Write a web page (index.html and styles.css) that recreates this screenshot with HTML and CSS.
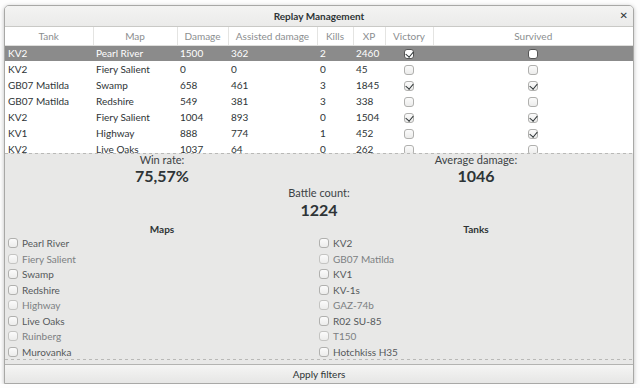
FILE: index.html
```html
<!DOCTYPE html>
<html lang="en">

<head>
    <meta charset="UTF-8">
    <meta name="viewport" content="width=device-width, initial-scale=1.0">
    <title>Replay Management</title>
    <link rel="stylesheet" href="styles.css">
</head>

<body>
    <div class="window">
        <header class="titlebar">
            <span class="title">Replay Management</span>
            <button class="close-button">&#x2715;</button>
        </header>

        <!-- replay list -->
        <div class="replays">
            <table class="replay-table">
                <colgroup>
                    <col style="width: 88px">
                    <col style="width: 84px">
                    <col style="width: 51px">
                    <col style="width: 89px">
                    <col style="width: 36px">
                    <col style="width: 32px">
                    <col style="width: 48px">
                    <col>
                </colgroup>
                <thead>
                    <tr>
                        <th>Tank</th>
                        <th>Map</th>
                        <th>Damage</th>
                        <th>Assisted damage</th>
                        <th>Kills</th>
                        <th>XP</th>
                        <th>Victory</th>
                        <th>Survived</th>
                    </tr>
                </thead>
                <tbody>
                    <tr class="selected">
                        <td>KV2</td><td>Pearl River</td><td>1500</td><td>362</td><td>2</td><td>2460</td>
                        <td class="cell-check"><span class="check checked"></span></td>
                        <td class="cell-check"><span class="check"></span></td>
                    </tr>
                    <tr>
                        <td>KV2</td><td>Fiery Salient</td><td>0</td><td>0</td><td>0</td><td>45</td>
                        <td class="cell-check"><span class="check"></span></td>
                        <td class="cell-check"><span class="check"></span></td>
                    </tr>
                    <tr>
                        <td>GB07 Matilda</td><td>Swamp</td><td>658</td><td>461</td><td>3</td><td>1845</td>
                        <td class="cell-check"><span class="check checked"></span></td>
                        <td class="cell-check"><span class="check checked"></span></td>
                    </tr>
                    <tr>
                        <td>GB07 Matilda</td><td>Redshire</td><td>549</td><td>381</td><td>3</td><td>338</td>
                        <td class="cell-check"><span class="check"></span></td>
                        <td class="cell-check"><span class="check"></span></td>
                    </tr>
                    <tr>
                        <td>KV2</td><td>Fiery Salient</td><td>1004</td><td>893</td><td>0</td><td>1504</td>
                        <td class="cell-check"><span class="check checked"></span></td>
                        <td class="cell-check"><span class="check checked"></span></td>
                    </tr>
                    <tr>
                        <td>KV1</td><td>Highway</td><td>888</td><td>774</td><td>1</td><td>452</td>
                        <td class="cell-check"><span class="check"></span></td>
                        <td class="cell-check"><span class="check checked"></span></td>
                    </tr>
                    <tr>
                        <td>KV2</td><td>Live Oaks</td><td>1037</td><td>64</td><td>0</td><td>262</td>
                        <td class="cell-check"><span class="check"></span></td>
                        <td class="cell-check"><span class="check"></span></td>
                    </tr>
                </tbody>
            </table>
        </div>
        <div class="undershoot"></div>

        <!-- summary -->
        <section class="summary">
            <div class="stat">
                <div class="stat-label">Win rate:</div>
                <div class="stat-value">75,57%</div>
            </div>
            <div class="stat">
                <div class="stat-label">Average damage:</div>
                <div class="stat-value">1046</div>
            </div>
            <div class="stat stat-wide">
                <div class="stat-label">Battle count:</div>
                <div class="stat-value">1224</div>
            </div>
        </section>

        <!-- filters -->
        <section class="filters">
            <div class="filter-group">
                <h2>Maps</h2>
                <label class="option"><span class="check"></span>Pearl River</label>
                <label class="option dim"><span class="check"></span>Fiery Salient</label>
                <label class="option"><span class="check"></span>Swamp</label>
                <label class="option"><span class="check"></span>Redshire</label>
                <label class="option dim"><span class="check"></span>Highway</label>
                <label class="option"><span class="check"></span>Live Oaks</label>
                <label class="option dim"><span class="check"></span>Ruinberg</label>
                <label class="option"><span class="check"></span>Murovanka</label>
            </div>
            <div class="filter-group">
                <h2>Tanks</h2>
                <label class="option"><span class="check"></span>KV2</label>
                <label class="option dim"><span class="check"></span>GB07 Matilda</label>
                <label class="option"><span class="check"></span>KV1</label>
                <label class="option"><span class="check"></span>KV-1s</label>
                <label class="option dim"><span class="check"></span>GAZ-74b</label>
                <label class="option"><span class="check"></span>R02 SU-85</label>
                <label class="option dim"><span class="check"></span>T150</label>
                <label class="option"><span class="check"></span>Hotchkiss H35</label>
            </div>
        </section>
        <div class="undershoot"></div>

        <button class="apply-button">Apply filters</button>
    </div>
</body>

</html>
```

FILE: styles.css
```css
* {
    margin: 0;
    padding: 0;
    box-sizing: border-box;
}

body {
    font-family: Lato, "Noto Sans", sans-serif;
    font-size: 10px;
    background-color: #fdfdfd;
    color: #2e3436;
    padding: 5px 6px 0 4px;
}

.window {
    width: 630px;
    height: 379px;
    background-color: #e8e8e7;
    border: 1px solid #a8a8a6;
    border-radius: 5px 5px 0 0;
    box-shadow: 0 1px 4px rgba(0, 0, 0, 0.25);
    display: flex;
    flex-direction: column;
    overflow: hidden;
}

/* title bar */

.titlebar {
    height: 21px;
    flex-shrink: 0;
    display: flex;
    align-items: center;
    justify-content: center;
    position: relative;
    background: linear-gradient(#f3f3f2, #ebebea);
    border-bottom: 1px solid #c9c9c6;
}

.title {
    font-weight: bold;
    font-size: 10px;
}

.close-button {
    position: absolute;
    right: 5px;
    top: 4px;
    border: none;
    background: none;
    font-family: "DejaVu Sans", sans-serif;
    font-size: 10px;
    font-weight: bold;
    color: #2e3436;
}

/* replay table */

.replays {
    height: 126px;
    flex-shrink: 0;
    background-color: #fff;
    overflow: hidden;
}

.replay-table {
    width: 100%;
    table-layout: fixed;
    border-collapse: collapse;
}

.replay-table th {
    height: 18px;
    font-weight: normal;
    color: #8b8e8f;
    border-bottom: 1px solid #dededc;
    border-left: 1px solid #e4e4e2;
    white-space: nowrap;
}

.replay-table th:first-child {
    border-left: none;
}

.replay-table td {
    height: 16px;
    padding-left: 3px;
    white-space: nowrap;
    overflow: hidden;
}

.replay-table tr.selected td {
    background-color: #8b8b8b;
    color: #fff;
}

.replay-table td.cell-check {
    padding-left: 0;
    text-align: center;
}

.check {
    display: inline-block;
    flex-shrink: 0;
    width: 10px;
    height: 10px;
    border: 1px solid #b0b0ae;
    border-radius: 3px;
    background: linear-gradient(#fbfbfb, #ececeb);
    vertical-align: middle;
    position: relative;
}

.check.checked::after {
    content: "";
    position: absolute;
    left: 2px;
    top: 0px;
    width: 4px;
    height: 6px;
    border-right: 1.5px solid #2e3436;
    border-bottom: 1.5px solid #2e3436;
    transform: rotate(40deg);
}

.selected .check {
    background: #fff;
    border-color: #555;
}

.undershoot {
    height: 1px;
    flex-shrink: 0;
    background: repeating-linear-gradient(to right, #b9b9b7 0 3px, transparent 3px 6px);
}

/* summary */

.summary {
    display: grid;
    grid-template-columns: 1fr 1fr;
    text-align: center;
}

.stat-wide {
    grid-column: 1 / 3;
}

.stat-label {
    font-size: 11px;
    line-height: 12px;
    color: #3c4245;
}

.stat-value {
    font-size: 16px;
    font-weight: bold;
    line-height: 20px;
}

.stat-wide .stat-label {
    line-height: 13px;
}

.stat-wide .stat-value {
    line-height: 22px;
}

/* filters */

.filters {
    flex: 1;
    display: grid;
    grid-template-columns: 1fr 1fr;
    padding-top: 2px;
}

.filter-group h2 {
    font-size: 10px;
    font-weight: bold;
    text-align: center;
    line-height: 12px;
}

.option {
    display: flex;
    align-items: center;
    gap: 4px;
    height: 15px;
    padding-left: 3px;
    font-weight: normal;
    color: #55595b;
}

.option:nth-of-type(odd) {
    height: 16px;
}

.filter-group + .filter-group .option {
    padding-left: 0;
}

.option.dim {
    color: #7c8082;
}

.option.dim .check {
    border-color: #c4c4c2;
}

/* apply button */

.apply-button {
    height: 19px;
    flex-shrink: 0;
    margin-top: 4px;
    border: none;
    border-top: 1px solid #b3b3b1;
    background: linear-gradient(#f5f5f4, #e6e6e5);
    font-family: Lato, "Noto Sans", sans-serif;
    font-size: 10px;
    color: #2e3436;
}
```
